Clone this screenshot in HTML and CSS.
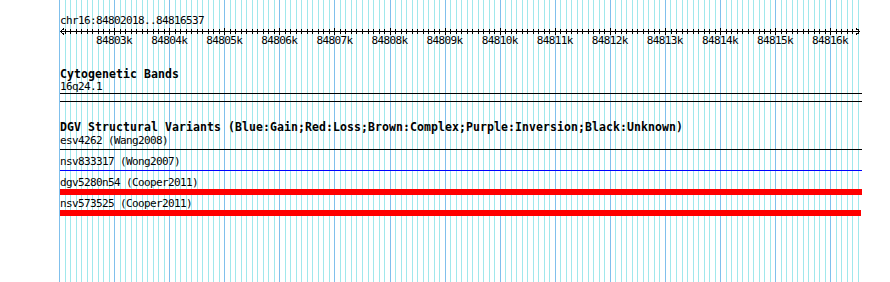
FILE: index.html
```html
<!DOCTYPE html>
<html>
<head>
<meta charset="utf-8">
<link rel="stylesheet" href="styles.css">
</head>
<body>
<div class="browser">
  <div class="grid"></div>
  <div class="tracks">
    <section class="ruler">
      <div class="small">chr16:84802018..84816537</div>
      <svg class="ruler-axis" width="802" height="7" viewBox="0 0 802 7" shape-rendering="crispEdges">
        <line x1="0" y1="4.5" x2="800" y2="4.5" stroke="#000" stroke-width="1"/>
        <line x1="4.518" y1="4.5" x2="800" y2="4.5" stroke="#000" stroke-width="5" stroke-dasharray="1 4.509"/>
        <line x1="54.1" y1="4.5" x2="800" y2="4.5" stroke="#000" stroke-width="7" stroke-dasharray="1 54.09"/>
        <polyline points="4,1.5 0.5,4.5 4,7.5" fill="none" stroke="#000" stroke-width="1"/>
        <polyline points="796,1.5 799.5,4.5 796,7.5" fill="none" stroke="#000" stroke-width="1"/>
      </svg>
      <div class="ruler-ticks small">
        <span>84803k</span><span>84804k</span><span>84805k</span><span>84806k</span><span>84807k</span><span>84808k</span><span>84809k</span><span>84810k</span><span>84811k</span><span>84812k</span><span>84813k</span><span>84814k</span><span>84815k</span><span>84816k</span>
      </div>
    </section>
    <section class="track cyto">
      <div class="track-title">Cytogenetic Bands</div>
      <div class="band-label small">16q24.1</div>
      <div class="band"></div>
    </section>
    <section class="track dgv">
      <div class="track-title">DGV Structural Variants (Blue:Gain;Red:Loss;Brown:Complex;Purple:Inversion;Black:Unknown)</div>
      <div class="feature">
        <div class="small">esv4262 (Wang2008)</div>
        <div class="glyph"><div class="line unknown"></div></div>
      </div>
      <div class="feature">
        <div class="small">nsv833317 (Wong2007)</div>
        <div class="glyph"><div class="line gain"></div></div>
      </div>
      <div class="feature">
        <div class="small">dgv5280n54 (Cooper2011)</div>
        <div class="glyph"><div class="bar loss"></div></div>
      </div>
      <div class="feature">
        <div class="small">nsv573525 (Cooper2011)</div>
        <div class="glyph"><div class="bar loss" style="width:801px"></div></div>
      </div>
    </section>
  </div>
</div>
</body>
</html>
```

FILE: styles.css
```css
body {
  margin: 0;
  background: #fff;
}

.browser {
  position: relative;
  height: 282px;
  overflow: hidden;
}

.grid {
  position: absolute;
  left: 59px;
  top: 0;
  bottom: 0;
  width: 802px;
  background-image:
    repeating-linear-gradient(90deg, #80c0ec 0 1px, transparent 1px 55.09px),
    repeating-linear-gradient(90deg, #a0e8ec 0 1px, transparent 1px 5.509px);
}

.tracks {
  position: relative;
  margin-left: 60px;
  width: 802px;
  padding-top: 14px;
  color: #000;
}

.small {
  font: 11px/13px "DejaVu Sans Mono", monospace;
  letter-spacing: -0.62px;
  white-space: nowrap;
}

.track-title {
  font: bold 11.5px/13px "DejaVu Sans Mono", monospace;
  letter-spacing: 0.077px;
  white-space: nowrap;
}

.ruler-axis {
  display: block;
  overflow: visible;
}

.ruler-ticks {
  display: flex;
  margin-left: 26.56px;
}

.ruler-ticks span {
  flex: none;
  width: 55.09px;
  text-align: center;
}

.cyto {
  margin-top: 21px;
}

.band-label {
  line-height: 12px;
}

.band {
  height: 7px;
  border-top: 1px solid #000;
  border-bottom: 1px solid #000;
}

.dgv {
  margin-top: 19px;
}

.glyph {
  display: flow-root;
  height: 6px;
  margin-bottom: 2px;
}

.line {
  height: 1px;
  margin-top: 2px;
}

.line.unknown {
  background: #000;
}

.line.gain {
  background: #00f;
}

.bar {
  height: 6px;
}

.bar.loss {
  background: #f00;
}
```
